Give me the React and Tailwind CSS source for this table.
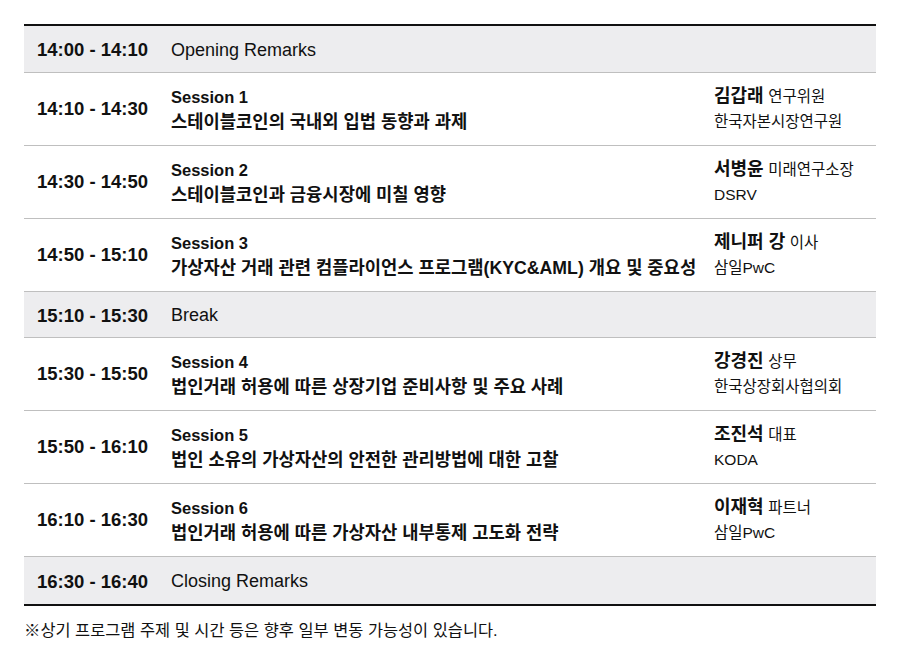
import React from 'react';

const rows = [
  { type: 'plain', time: '14:00 - 14:10', title: 'Opening Remarks' },
  {
    type: 'session', time: '14:10 - 14:30', session: 'Session 1',
    title: '스테이블코인의 국내외 입법 동향과 과제',
    name: '김갑래', role: '연구위원', org: '한국자본시장연구원',
  },
  {
    type: 'session', time: '14:30 - 14:50', session: 'Session 2',
    title: '스테이블코인과 금융시장에 미칠 영향',
    name: '서병윤', role: '미래연구소장', org: 'DSRV',
  },
  {
    type: 'session', time: '14:50 - 15:10', session: 'Session 3',
    title: '가상자산 거래 관련 컴플라이언스 프로그램(KYC&AML) 개요 및 중요성',
    name: '제니퍼 강', role: '이사', org: '삼일PwC',
  },
  { type: 'plain', time: '15:10 - 15:30', title: 'Break' },
  {
    type: 'session', time: '15:30 - 15:50', session: 'Session 4',
    title: '법인거래 허용에 따른 상장기업 준비사항 및 주요 사례',
    name: '강경진', role: '상무', org: '한국상장회사협의회',
  },
  {
    type: 'session', time: '15:50 - 16:10', session: 'Session 5',
    title: '법인 소유의 가상자산의 안전한 관리방법에 대한 고찰',
    name: '조진석', role: '대표', org: 'KODA',
  },
  {
    type: 'session', time: '16:10 - 16:30', session: 'Session 6',
    title: '법인거래 허용에 따른 가상자산 내부통제 고도화 전략',
    name: '이재혁', role: '파트너', org: '삼일PwC',
  },
  { type: 'plain', time: '16:30 - 16:40', title: 'Closing Remarks' },
];

const Time = ({ children }) => (
  <div className="w-[147px] shrink-0 pl-[13px] text-[18.5px] font-bold text-[#111]">
    {children}
  </div>
);

export default function App() {
  return (
    <div className="min-h-[655px] w-[900px] bg-white pt-[24px] font-['Liberation_Sans','Noto_Sans_CJK_KR',sans-serif] text-[#111]">
      <div className="mx-[24px] border-t-2 border-b-2 border-[#111]">
        {rows.map((r, i) => {
          const last = i === rows.length - 1;
          if (r.type === 'plain') {
            return (
              <div
                key={i}
                className={`flex items-center bg-[#ededef] pt-[2px] ${r.title === 'Break' ? 'h-[46px]' : 'h-[47px]'} ${last ? '' : 'border-b border-[#bfbfbf]'}`}
              >
                <Time>{r.time}</Time>
                <div className="text-[18px]">{r.title}</div>
              </div>
            );
          }
          return (
            <div key={i} className="flex h-[73px] items-center border-b border-[#bfbfbf]">
              <Time>{r.time}</Time>
              <div className="flex w-[543px] shrink-0 flex-col gap-[3px] pt-[1px]">
                <div className="text-[16.5px] font-bold leading-[22px]">{r.session}</div>
                <div className="text-[17.7px] font-bold leading-[22px] whitespace-nowrap">{r.title}</div>
              </div>
              <div className="flex flex-col gap-[3px]">
                <div className="leading-[22px] whitespace-nowrap">
                  <span className="text-[18px] font-bold">{r.name}</span>{' '}
                  <span className="text-[15.5px]">{r.role}</span>
                </div>
                <div className="text-[15.5px] leading-[22px]">{r.org}</div>
              </div>
            </div>
          );
        })}
      </div>
      <div className="mx-[24px] mt-[14px] text-[16.4px] leading-[20px]">
        ※상기 프로그램 주제 및 시간 등은 향후 일부 변동 가능성이 있습니다.
      </div>
    </div>
  );
}
